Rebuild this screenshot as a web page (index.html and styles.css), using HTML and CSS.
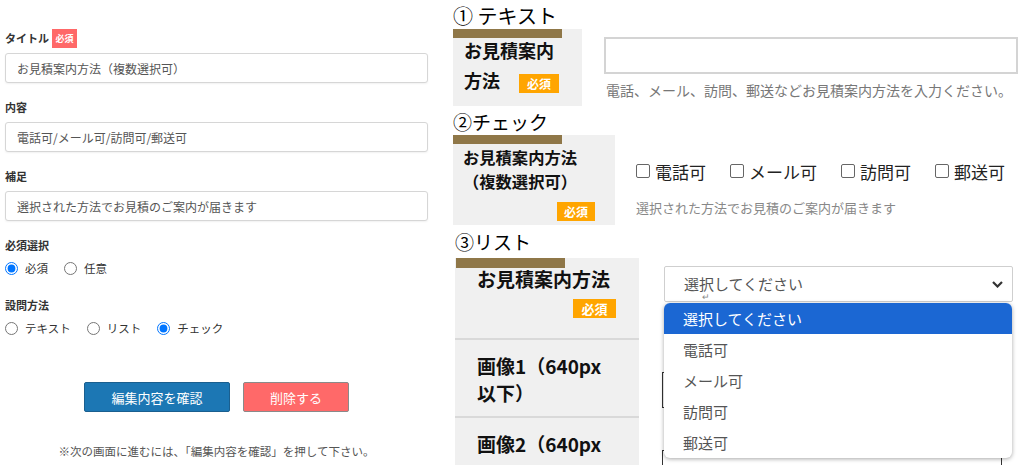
FILE: index.html
```html
<!DOCTYPE html>
<html lang="ja">
<head>
  <meta charset="UTF-8" />
  <meta name="viewport" content="width=device-width, initial-scale=1" />
  <title>設問の編集</title>
  <link rel="stylesheet" href="styles.css">
</head>
<body>
  <div class="page">
    <form class="editor" id="questionForm">
      <label class="f-label" for="qTitle">タイトル<span class="req-red">必須</span></label>
      <input class="f-input" type="text" id="qTitle" value="お見積案内方法（複数選択可）" />

      <label class="f-label" for="qBody">内容</label>
      <input class="f-input" type="text" id="qBody" value="電話可/メール可/訪問可/郵送可" />

      <label class="f-label" for="qNote">補足</label>
      <input class="f-input" type="text" id="qNote" value="選択された方法でお見積のご案内が届きます" />

      <div class="f-label">必須選択</div>
      <div class="radio-row">
        <label><input type="radio" name="required" checked />必須</label>
        <label><input type="radio" name="required" />任意</label>
      </div>

      <div class="f-label f-label-gap">設問方法</div>
      <div class="radio-row">
        <label><input type="radio" name="kind" />テキスト</label>
        <label><input type="radio" name="kind" />リスト</label>
        <label><input type="radio" name="kind" checked />チェック</label>
      </div>

      <div class="btn-row">
        <button type="submit" class="btn btn-confirm">編集内容を確認</button>
        <button type="button" class="btn btn-delete">削除する</button>
      </div>
      <p class="f-note">※次の画面に進むには、「編集内容を確認」を押して下さい。</p>
    </form>

    <div class="samples">
      <!-- text -->
      <div class="sample-title t1">① テキスト</div>
      <div class="sample-row">
        <div class="q-head h1">
          <div class="q-bar"></div>
          <div class="q-text">お見積案内<br>方法<span class="req-orange">必須</span></div>
        </div>
        <div class="q-body b1">
          <input type="text" class="q-input" />
          <p class="q-hint">電話、メール、訪問、郵送などお見積案内方法を入力ください。</p>
        </div>
      </div>

      <!-- check -->
      <div class="sample-title t2">②チェック</div>
      <div class="sample-row">
        <div class="q-head h2">
          <div class="q-bar"></div>
          <div class="q-text">お見積案内方法<br>（複数選択可）</div>
          <span class="req-orange">必須</span>
        </div>
        <div class="q-body b2">
          <div class="check-row">
            <label><input type="checkbox" />電話可</label>
            <label><input type="checkbox" />メール可</label>
            <label><input type="checkbox" />訪問可</label>
            <label><input type="checkbox" />郵送可</label>
          </div>
          <p class="q-hint2">選択された方法でお見積のご案内が届きます</p>
        </div>
      </div>

      <!-- list -->
      <div class="sample-title t3">③リスト</div>
      <div class="q-table">
        <div class="sample-row">
          <div class="q-head h3">
            <div class="q-bar"></div>
            <div class="q-text">お見積案内方法</div>
            <span class="req-orange">必須</span>
          </div>
          <div class="q-body b3">
            <div class="fake-select">
              選択してください
              <span class="caret-mark">↵</span>
              <svg class="chevron" width="11" height="7" viewBox="0 0 11 7">
                <polyline points="1,1 5.5,5.5 10,1" fill="none" stroke="#333" stroke-width="2.2" />
              </svg>
              <ul class="dropdown">
                <li class="active">選択してください</li>
                <li>電話可</li>
                <li>メール可</li>
                <li>訪問可</li>
                <li>郵送可</li>
              </ul>
            </div>
          </div>
        </div>
        <div class="sample-row">
          <div class="q-head img-head">画像1（640px<br>以下）</div>
          <div class="q-body b3"><div class="file-box"></div></div>
        </div>
        <div class="sample-row">
          <div class="q-head img-head">画像2（640px</div>
          <div class="q-body b3"><div class="file-box"></div></div>
        </div>
      </div>
    </div>
  </div>
</body>
</html>
```

FILE: styles.css
```css
body {
  margin: 0;
  font-family: "Noto Sans CJK JP", "Noto Sans", sans-serif;
  background: #fff;
  overflow: hidden;
}
.page {
  display: flex;
  align-items: flex-start;
}

/* left editor */
.editor {
  flex: none;
  width: 423px;
  padding: 28px 25px 0 5px;
}
.f-label {
  display: flex;
  align-items: center;
  height: 20px;
  margin-bottom: 5px;
  font-size: 11px;
  font-weight: bold;
  color: #333;
}
.f-label-gap {
  margin-top: 19px;
}
.req-red {
  display: inline-block;
  width: 25px;
  height: 19px;
  line-height: 19px;
  margin-left: 3px;
  background: #ff6868;
  color: #fff;
  font-size: 9px;
  text-align: center;
}
.f-input {
  display: block;
  width: 100%;
  height: 30px;
  box-sizing: border-box;
  margin: 0 0 14px;
  padding: 0 11px;
  border: 1px solid #d6d6d6;
  border-radius: 3px;
  box-shadow: 0 1px 2px rgba(0,0,0,0.06);
  font-family: inherit;
  font-size: 12px;
  color: #555;
}
.radio-row {
  display: flex;
  align-items: center;
  height: 16px;
  font-size: 11.5px;
  color: #333;
}
.radio-row label {
  display: flex;
  align-items: center;
  margin-right: 16px;
}
.radio-row input {
  width: 13px;
  height: 13px;
  margin: 0 7px 0 0;
}
.btn-row {
  display: flex;
  justify-content: center;
  gap: 13px;
  margin-top: 46px;
}
.btn {
  height: 30px;
  border-radius: 2px;
  font-family: inherit;
  font-size: 13px;
  color: #fff;
  cursor: pointer;
}
.btn-confirm {
  width: 146px;
  background: #1c77b4;
  border: 1px solid #1a5f8f;
}
.btn-delete {
  width: 106px;
  background: #ff6969;
  border: 1px solid #8a8a8a;
}
.f-note {
  margin: 29px 0 0;
  line-height: 20px;
  font-size: 11.5px;
  color: #555;
  text-align: center;
}

/* right samples */
.samples {
  flex: 1;
  min-width: 0;
}
.sample-title {
  height: 24px;
  line-height: 24px;
  font-size: 19px;
  color: #000;
}
.t1 { margin-top: 4px; font-size: 20px; }
.t2 { margin-top: 4px; }
.t3 { margin-top: 5px; padding-left: 2px; }
.sample-row {
  display: flex;
  align-items: flex-start;
  margin-top: 1px;
}
.q-head {
  flex: none;
  box-sizing: border-box;
  background: #f0f0f0;
  font-weight: bold;
  color: #111;
}
.q-bar {
  width: 109px;
  height: 9px;
  background: #8f7748;
}
.req-orange {
  display: inline-block;
  height: 19px;
  line-height: 19px;
  background: #ffa500;
  color: #fff;
  font-size: 12px;
  font-weight: bold;
  text-align: center;
}

.h1 {
  width: 129px;
  padding-bottom: 11px;
}
.h1 .q-text {
  margin-top: -3px;
  padding-left: 11px;
  font-size: 18px;
  line-height: 30px;
}
.h1 .req-orange {
  width: 40px;
  margin-left: 19px;
  vertical-align: middle;
}
.b1 {
  flex: 1;
  margin-left: 22px;
}
.q-input {
  display: block;
  width: 414px;
  height: 37px;
  box-sizing: border-box;
  margin-top: 8px;
  border: 2px solid #d4d4d4;
}
.q-hint {
  margin: 6px 0 0 2px;
  line-height: 20px;
  font-size: 14px;
  color: #777;
  white-space: nowrap;
}

.h2 {
  display: flex;
  flex-direction: column;
  width: 162px;
  padding: 0 20px 4px 0;
}
.h2 .q-text {
  margin-top: 1px;
  padding-left: 10px;
  font-size: 16.3px;
  line-height: 24px;
}
.h2 .req-orange {
  align-self: flex-end;
  width: 38px;
  margin-top: 9px;
}
.b2 {
  margin-left: 21px;
}
.check-row {
  display: flex;
  align-items: center;
  gap: 24px;
  height: 20px;
  margin-top: 26px;
  font-size: 17px;
  color: #222;
}
.check-row label {
  display: flex;
  align-items: center;
}
.check-row input {
  appearance: none;
  width: 14px;
  height: 14px;
  margin: 0 5px 0 0;
  border: 1px solid #666;
  border-radius: 2px;
  background: #fff;
}
.q-hint2 {
  margin: 17px 0 0;
  line-height: 20px;
  font-size: 13px;
  color: #888;
}

.q-table .sample-row {
  margin-top: 0;
}
.q-table > .sample-row:first-child {
  margin-top: 4px;
}
.h3 {
  display: flex;
  flex-direction: column;
  width: 184px;
  margin-left: 2px;
  padding: 0 23px 20px 0;
}
.h3 .q-bar {
  height: 10px;
  margin-left: 1px;
}
.h3 .q-text {
  padding-left: 22px;
  font-size: 19px;
  line-height: 22px;
}
.h3 .req-orange {
  align-self: flex-end;
  width: 43px;
  margin-top: 9px;
  font-size: 13px;
}
.img-head {
  width: 184px;
  margin-left: 2px;
  padding: 12px 0 10px 22px;
  border-top: 2px solid #d9d9d9;
  font-size: 19px;
  line-height: 27px;
}
.b3 {
  margin-left: 25px;
}
.fake-select {
  position: relative;
  width: 349px;
  height: 36px;
  box-sizing: border-box;
  margin-top: 8px;
  padding-left: 19px;
  border: 1px solid #cfcfcf;
  border-radius: 2px;
  line-height: 34px;
  font-size: 15px;
  color: #555;
}
.caret-mark {
  position: absolute;
  left: 37px;
  top: 25px;
  line-height: 9px;
  font-size: 9px;
  color: #888;
}
.chevron {
  position: absolute;
  right: 9px;
  top: 14px;
}
.dropdown {
  position: absolute;
  left: -1px;
  top: 36px;
  z-index: 5;
  width: 348px;
  margin: 0;
  padding: 0;
  list-style: none;
  background: #fff;
  border-radius: 6px;
  overflow: hidden;
  box-shadow: 0 1px 4px rgba(0,0,0,0.35);
}
.dropdown li {
  height: 31px;
  line-height: 31px;
  padding-left: 19px;
  font-size: 15px;
  color: #555;
}
.dropdown li.active {
  background: #1b67d3;
  color: #fff;
}
.file-box {
  width: 338px;
  height: 34px;
  margin-top: 34px;
  margin-left: -2px;
  border: 1px solid #333;
}
```
